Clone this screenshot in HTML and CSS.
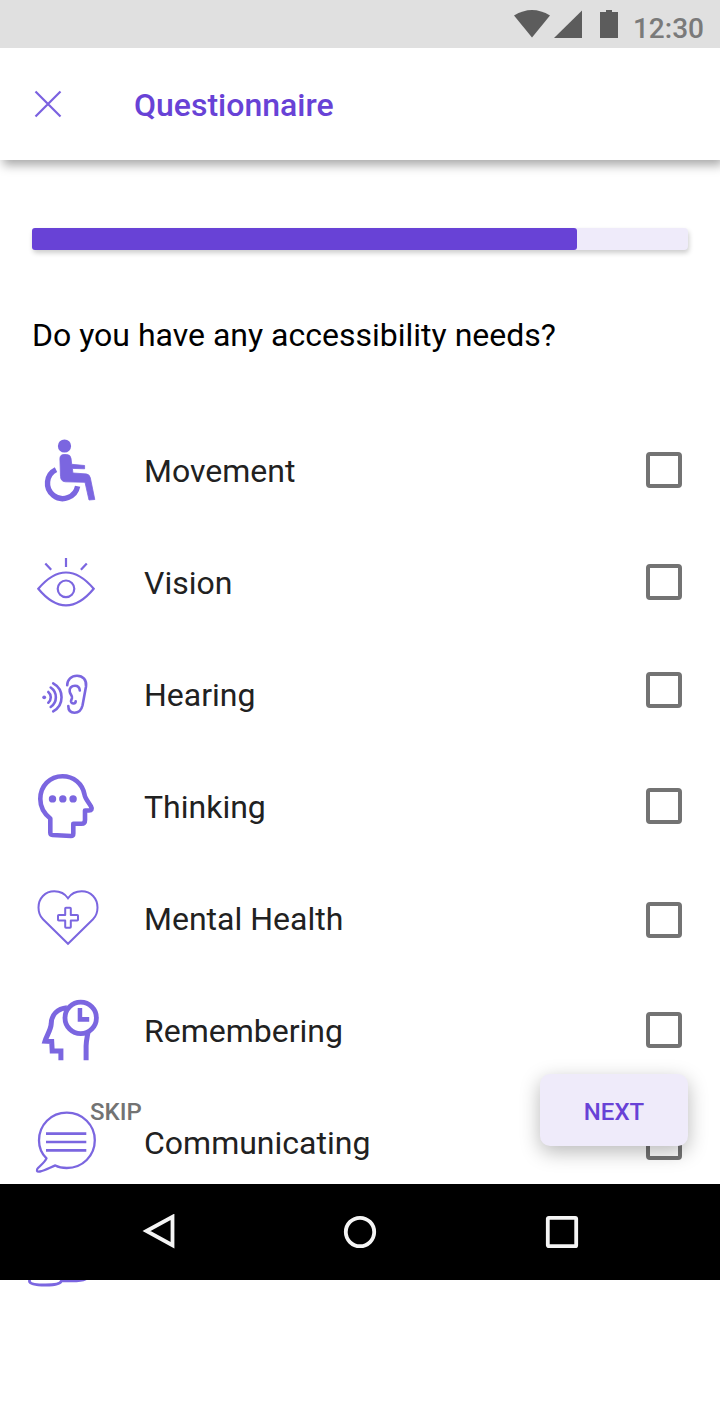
FILE: index.html
```html
<!DOCTYPE html>
<html lang="en">
<head>
  <meta charset="UTF-8">
  <title>Questionnaire</title>
  <link rel="stylesheet" href="styles.css">
</head>
<body>

<div class="status_bar">
  <svg width="106" height="32" viewBox="0 0 106 32">
    <path d="M0 7.500Q18 -3.500 36 7.500L18 29.500Z"/>
    <path d="M68 2.500V30H40Z"/>
    <path d="M86 4h6V2h6v2h6v26H86Z"/>
  </svg>
  <span class="time">12:30</span>
</div>

<header class="app_bar">
  <svg class="close" width="28" height="28" viewBox="0 0 28 28"><path d="M1.500 1.500L26.500 26.500M26.500 1.500L1.500 26.500"/></svg>
  <h1>Questionnaire</h1>
</header>

<main>
  <div class="progress"><div class="progress_fill" style="width: 83.1%"></div></div>

  <h2>Do you have any accessibility needs?</h2>

  <ul class="needs">
    <li>
      <svg class="icon" viewBox="0 0 80 80">
        <g class="solid">
          <circle cx="36.500" cy="16" r="6.600"/>
          <path stroke="#7b66e0" stroke-width="0.8" d="M31.900 28.800Q31.900 24.500 36 24.500H38.500Q42.500 24.500 43 28.300L43.700 34.300L56.600 35.500V38.800L44.400 38.400L44.900 43L58.300 43.900Q61.500 44.200 62.300 47.800L66.800 69.500L61 70L57 52.300L37.500 51.800Q32.800 51.600 32.500 46.500Z"/>
        </g>
        <path stroke-width="5.400" d="M28 39.700A15.200 15.200 0 1 0 49.600 56.300"/>
      </svg>
      <span>Movement</span>
      <i class="box"></i>
    </li>
    <li>
      <svg class="icon" viewBox="0 0 80 80">
        <path stroke-width="2.200" d="M10.300 46.800Q24 30.500 38 30.500T65.700 46.800Q52 63.400 38 63.400T10.300 46.800Z"/>
        <circle stroke-width="2.200" cx="38" cy="46.800" r="8.300"/>
        <path stroke-width="2.200" d="M38 16V25M17.300 21.500L23.200 27.800M58.800 21.500L52.900 27.800"/>
      </svg>
      <span>Vision</span>
      <i class="box"></i>
    </li>
    <li>
      <svg class="icon" viewBox="0 0 80 80">
        <circle class="solid" cx="16.200" cy="43.300" r="1.900"/>
        <g stroke-width="2.600" stroke-linecap="round">
          <path d="M20.300 38A7 7 0 0 1 20.300 48.700M22.700 33.500A11.800 11.800 0 0 1 22.700 53M25.200 29.300A16 16 0 0 1 25.200 57.400"/>
          <path d="M39.200 31.300C39.200 25.500 43.500 21.700 49 21.700C55 21.700 58.800 26 58 32.500L54.500 51.500C53.300 56.500 50.500 58.700 46.500 58.700C42.500 58.700 40.300 56 40.300 52"/>
          <path d="M51.800 36.500C51.500 33.300 49.800 31.700 47 31.700C43.300 31.700 41.200 34.300 41.700 37.500C42 40.500 44.600 41.500 44 44C43.500 45.800 42.800 46.500 43 47.500C43.700 50.200 47.700 50 47.700 47.300"/>
        </g>
      </svg>
      <span>Hearing</span>
      <i class="box shift_up"></i>
    </li>
    <li>
      <svg class="icon" viewBox="0 0 80 80">
        <path stroke-width="4.600" stroke-linejoin="round" d="M22.300 52.500C16 47.500 12.300 41 12.300 33C12.300 20 22 10.200 34.500 10.200C45.500 10.200 54.500 17.500 56.500 28.500C57 32.500 60.500 36 63 40.500C64.500 43 63.500 44.500 61 44.500H57V54Q57 57.800 53.500 57.800H45.300V67.500Q45.300 70 43 70L24.500 69Q22.300 68.800 22.300 66.500Z"/>
        <g class="solid"><circle cx="24.500" cy="32.900" r="3.700"/><circle cx="34.800" cy="32.900" r="3.700"/><circle cx="45.100" cy="32.900" r="3.700"/></g>
      </svg>
      <span>Thinking</span>
      <i class="box"></i>
    </li>
    <li>
      <svg class="icon" viewBox="0 0 80 80">
        <path stroke-width="2" d="M40 20.300C37 15.800 32.500 13.300 26.300 13.300C17 13.300 10.500 20.500 10.500 29.500C10.500 34.500 12 38.300 15 41.300L40 65.800L65 41.300C68 38.300 69.500 34.500 69.500 29.500C69.500 20.500 63 13.300 53.700 13.300C47.500 13.300 43 15.800 40 20.300Z"/>
        <path stroke-width="2" stroke-linejoin="round" d="M38 29.700H42Q42.800 29.700 42.800 30.500V36.900H49.200Q50 36.900 50 37.700V41.700Q50 42.500 49.200 42.500H42.800V48.900Q42.800 49.700 42 49.700H38Q37.200 49.700 37.200 48.900V42.500H30.800Q30 42.500 30 41.700V37.700Q30 36.900 30.800 36.900H37.200V30.500Q37.200 29.700 38 29.700Z"/>
      </svg>
      <span>Mental Health</span>
      <i class="box shift_down"></i>
    </li>
    <li>
      <svg class="icon" viewBox="0 0 80 80">
        <circle stroke-width="4.800" cx="52.700" cy="27.900" r="15.700"/>
        <path class="solid" d="M49.700 18H54.200V27H61.200V31.800H49.700Z"/>
        <path stroke-width="5" d="M39 17.800C29.500 18.800 23.300 24.800 23.200 34C22.800 40 18.700 45.500 17 51.200L23.700 51.400L24.200 61H32.900V70.300M60 42C59.200 47 58.100 51 58.100 56V70.300"/>
      </svg>
      <span>Remembering</span>
      <i class="box"></i>
    </li>
    <li>
      <svg class="icon" viewBox="0 0 80 80">
        <path stroke-width="2.300" stroke-linejoin="round" d="M18.500 56.400C13.500 51.500 11 45.500 11 38.500C11 23 23 10.700 38.800 10.700C54.500 10.700 66.800 23 66.800 38.300C66.800 53.800 54.500 66 38.800 66C34.500 66 30.500 65.200 27.300 63.400C22 65.500 17 68.500 12 69.500C8.500 70.200 8 68 10 66C13.500 62.500 17 60 18.500 56.400Z"/>
        <path stroke-width="2.700" d="M18 31.600H58.300M18 40H58.300M18 48.400H58.300"/>
      </svg>
      <span>Communicating</span>
      <i class="box"></i>
    </li>
    <li>
      <svg class="icon" viewBox="0 0 80 80">
        <path stroke-width="2.800" d="M1.500 50V67.500Q2 71 17.500 71T33.500 66.500V50M33.500 66.500Q52 67.800 57.500 65V50"/>
      </svg>
    </li>
  </ul>
</main>

<a class="skip">SKIP</a>
<a class="next">NEXT</a>

<nav class="nav_bar">
  <svg width="36" height="36" viewBox="0 0 36 36"><path d="M4.500 17L30.500 2.800V31.200Z"/></svg>
  <svg width="36" height="36" viewBox="1 0 36 36"><circle cx="18" cy="18" r="14.200"/></svg>
  <svg width="36" height="36" viewBox="0 0 36 36"><rect x="3.800" y="3.800" width="28.400" height="28.400" rx="1"/></svg>
</nav>

</body>
</html>
```
FILE: styles.css
```css
* { box-sizing: border-box; }
body { margin: 0; height: 1406px; position: relative; overflow: hidden; background: #fff; font-family: Roboto, sans-serif; }
h1, h2 { margin: 0; }

.status_bar { position: relative; z-index: 1; height: 48px; padding: 8px 16px 0 514px; display: flex; justify-content: space-between; background: #e0e0e0; }
.status_bar svg { fill: #5c5c5c; }
.time { padding-top: 1px; font-size: 28px; font-weight: 500; line-height: 40px; color: #7a7a7a; }

.app_bar { height: 112px; padding: 0 34px; display: flex; align-items: center; gap: 72px; box-shadow: 3px 5px 10px rgba(0, 0, 0, 0.35); }
.close { fill: none; stroke: #7b61e0; stroke-width: 2.200; }
.app_bar h1 { font-size: 32px; font-weight: 500; line-height: 38px; padding-top: 2px; color: #6842d6; }

main { padding: 68px 32px 0; }
.progress { height: 22px; border-radius: 4px; background: #efebfa; box-shadow: 1px 3px 5px rgba(0, 0, 0, 0.2); }
.progress_fill { height: 22px; border-radius: 3px; background: #6842d6; }
main h2 { margin-top: 64px; font-size: 32px; font-weight: 400; line-height: 42px; color: #000; }

.needs { list-style: none; margin: 58px 0 0; padding: 0; }
.needs li { height: 112px; display: flex; align-items: center; padding-right: 6px; }
.icon { width: 80px; height: 80px; margin: 0 36px 0 -4px; fill: none; stroke: #7b66e0; }
.solid { fill: #7b66e0; stroke: none; }
.needs span { padding-top: 2px; font-size: 32px; line-height: 38px; color: #212121; }
.box { width: 36px; height: 36px; margin-left: auto; border: 4px solid #737373; border-radius: 4px; }
.shift_up { margin-bottom: 8px; }
.shift_down { margin-top: 4px; }

.skip { position: absolute; left: 90px; top: 1098px; font-size: 24px; font-weight: 500; line-height: 28px; color: #737373; }
.next { position: absolute; left: 540px; top: 1074px; width: 148px; height: 72px; border-radius: 10px; background: #efebfa; box-shadow: 0 6px 20px rgba(0, 0, 0, 0.28); font-size: 24px; font-weight: 500; line-height: 76px; text-align: center; color: #6842d6; }

.nav_bar { position: absolute; left: 0; top: 1184px; width: 720px; height: 96px; padding: 0 140px 0 142px; display: flex; justify-content: space-between; align-items: center; background: #000; }
.nav_bar svg { fill: none; stroke: #f5f5f5; stroke-width: 3.800; }
```
